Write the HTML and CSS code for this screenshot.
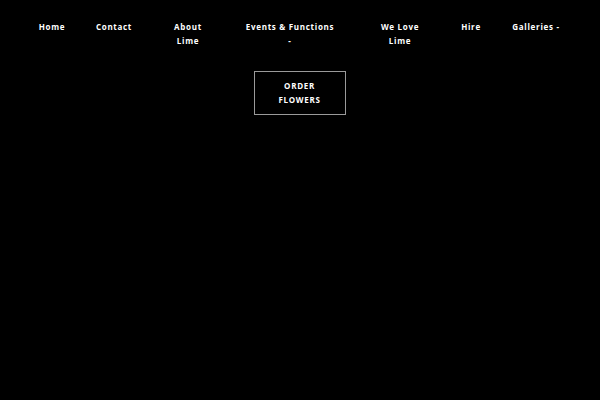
FILE: index.html
```html
<!DOCTYPE html>
<html>
<head>
<meta charset="utf-8">
<link rel="stylesheet" href="styles.css">
</head>
<body>
<header class="site-header">
  <nav class="main-nav">
    <ul class="nav-list">
      <li class="nav-item"><a href="#">Home</a></li>
      <li class="nav-item"><a href="#">Contact</a></li>
      <li class="nav-item nav-narrow"><a href="#">About Lime</a></li>
      <li class="nav-item nav-events"><a href="#">Events &amp; Functions -</a></li>
      <li class="nav-item nav-narrow"><a href="#">We Love Lime</a></li>
      <li class="nav-item"><a href="#">Hire</a></li>
      <li class="nav-item"><a href="#">Galleries -</a></li>
    </ul>
  </nav>
  <div class="cta-wrap">
    <a class="cta" href="#">ORDER FLOWERS</a>
  </div>
</header>
</body>
</html>
```
FILE: styles.css
```css
html, body {
  margin: 0;
  padding: 0;
  background: #000;
  width: 600px;
  height: 400px;
  overflow: hidden;
}
body {
  font-family: "Open Sans", "DejaVu Sans", sans-serif;
  color: #fff;
  font-weight: 700;
  font-size: 8px;
  letter-spacing: 0.7px;
  line-height: 14px;
}
a {
  color: #fff;
  text-decoration: none;
}
.site-header {
  padding-top: 20px;
}
.nav-list {
  list-style: none;
  margin: 0;
  padding: 0 0 0 21px;
  display: grid;
  grid-template-columns: 62px 62px 86px 118px 102px 40px 90px;
}
.nav-item {
  display: flex;
  justify-content: center;
  text-align: center;
}
.nav-item a {
  display: block;
}
.nav-narrow a {
  max-width: 48px;
}
.nav-events a {
  max-width: 94px;
}
.cta-wrap {
  display: flex;
  justify-content: center;
  padding-top: 23px;
}
.cta {
  display: block;
  box-sizing: border-box;
  width: 92px;
  border: 1px solid #9a9a9a;
  padding: 7px 10px;
  text-align: center;
  margin-left: -1px;
}
```
